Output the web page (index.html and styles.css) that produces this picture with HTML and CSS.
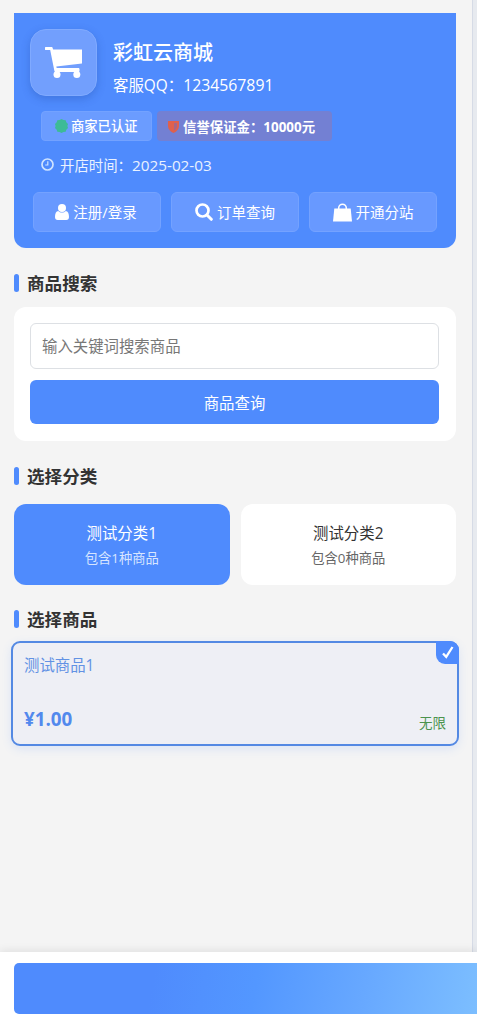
FILE: index.html
```html
<!DOCTYPE html>
<html lang="zh-CN">
<head>
<meta charset="utf-8">
<title>彩虹云商城</title>
<link rel="stylesheet" href="styles.css">
</head>
<body>
<main class="page">
  <header class="shop">
    <div class="shop-top">
      <div class="logo">
        <svg width="37" height="34" viewBox="0 0 37 34" fill="#fff"><path d="M1 1h6.200l1 2.600H37V17.500L11.300 20.600l.5 2H34.500v3H9.500L5.200 4H1a1.500 1.500 0 0 1 0-3z"/><path d="M10 22h24v4H10z"/><circle cx="12" cy="28.600" r="3.500"/><circle cx="31.800" cy="28.600" r="3.500"/></svg>
      </div>
      <div class="shop-name">
        <h1>彩虹云商城</h1>
        <p>客服QQ：<span class="number">1234567891</span></p>
      </div>
    </div>
    <div class="badges">
      <span class="badge verified"><svg width="13" height="14" viewBox="0 0 13 14"><path fill="#3dbb97" d="M6.500 0 8.500 1l2.200.2.600 2.100L13 5l-.6 2 .6 2-1.700 1.700-.6 2.100-2.200.2-2 1-2-1-2.200-.2-.6-2.100L0 9l.6-2L0 5l1.700-1.700.6-2.100L4.500 1z"/></svg><span>商家已认证</span></span>
      <span class="badge deposit"><svg width="11" height="13" viewBox="0 0 11 13"><path fill="#df604c" d="M0 1h11v5c0 3-2 5.500-5.500 7C2 11.500 0 9 0 6z"/><path fill="#a66587" d="M6 3h3v3c0 2-1 3.400-3 4.500z"/></svg><span>信誉保证金：10000元</span></span>
    </div>
    <div class="opened"><svg width="13" height="13" viewBox="0 0 13 13" fill="none" stroke="#cfe3ff"><circle cx="6.500" cy="6.500" r="5.500" stroke-width="1.700"/><path d="M6.800 3.300v3.700H4.200" stroke-width="1.200"/></svg><span>开店时间：<span class="date">2025-02-03</span></span></div>
    <nav class="actions">
      <a class="action"><svg width="14" height="16" viewBox="0 0 14 16" fill="#fff"><circle cx="7" cy="4" r="4"/><path d="M3.300 7c1 1 2.200 1.600 3.700 1.600S9.700 8 10.700 7C13 7.300 14 9.700 14 13c0 1.800-1 3-2.700 3H2.700C1 16 0 14.800 0 13c0-3.300 1-5.700 3.300-6z"/></svg><span>注册/登录</span></a>
      <a class="action"><svg width="18" height="18" viewBox="0 0 18 18" fill="none" stroke="#fff"><circle cx="7.500" cy="7.500" r="6" stroke-width="2.700"/><path d="m12 12 4.300 4.300" stroke-width="3" stroke-linecap="round"/></svg><span>订单查询</span></a>
      <a class="action"><svg width="19" height="19" viewBox="0 0 19 19"><path d="M5.700 8V5a3.800 3.800 0 0 1 7.600 0v3" fill="none" stroke="#fff" stroke-width="1.500"/><path fill="#fff" d="M1.300 5.500h16.400L19 18.500H0z"/></svg><span>开通分站</span></a>
    </nav>
  </header>

  <h2 class="section-title search-title">商品搜索</h2>
  <form class="search">
    <input class="keyword" type="text" placeholder="输入关键词搜索商品">
    <button class="submit" type="button">商品查询</button>
  </form>

  <h2 class="section-title category-title">选择分类</h2>
  <div class="categories">
    <div class="category selected"><strong>测试分类1</strong><small>包含1种商品</small></div>
    <div class="category"><strong>测试分类2</strong><small>包含0种商品</small></div>
  </div>

  <h2 class="section-title product-title">选择商品</h2>
  <article class="product">
    <span class="check"><svg width="12" height="13" viewBox="0 0 12 13" fill="none" stroke="#fff" stroke-width="2.300"><path d="m1 7.500 3.200 3.300L10.500 1"/></svg></span>
    <h3>测试商品1</h3>
    <div class="product-foot"><b>¥1.00</b><span>无限</span></div>
  </article>
</main>
<footer class="bottom"><div class="buy"></div></footer>
</body>
</html>
```

FILE: styles.css
```css
* { box-sizing: border-box; }
html { overflow: hidden; }
body {
  margin: 0;
  height: 1024px;
  display: flex;
  flex-direction: column;
  overflow: hidden;
  background: #e7eaef;
  color: #333;
  font-family: "Open Sans", "Noto Sans CJK SC", sans-serif;
  font-size: 15.400px;
}
h1, h2, h3, p { margin: 0; }
svg { display: block; flex: none; }

.page {
  width: 473px;
  height: 952px;
  padding: 13px 16px 0 14px;
  background: #f4f4f4;
  border-right: 1px solid #d6dbe6;
}

.shop {
  height: 235px;
  padding: 16px 19px 0;
  border-radius: 0 0 12px 12px;
  background: #4f8bfd;
  color: #fff;
}
.shop-top { display: flex; gap: 16px; height: 67px; margin-left: -3px; }
.logo {
  width: 67px;
  height: 67px;
  display: flex;
  align-items: center;
  justify-content: center;
  border: 1px solid #80aaff;
  border-radius: 16px;
  background: #729ffd;
  box-shadow: 0 3px 8px rgba(30, 70, 160, .3);
}
.shop-name { padding-top: 7px; }
.shop-name h1 { font-size: 20px; line-height: 33px; font-weight: 500; }
.shop-name p { font-size: 15.400px; line-height: 32px; white-space: nowrap; }
.number { font-size: 15.800px; }

.badges { display: flex; gap: 5px; margin: 15px 0 0 8px; }
.badge {
  height: 30px;
  display: flex;
  align-items: center;
  border-radius: 4px;
  font-size: 13.300px;
  white-space: nowrap;
}
.verified { width: 111px; padding-left: 13px; gap: 3px; background: #6b9cff; border: 1px solid #73a2ff; font-weight: 500; }
.deposit { width: 175px; padding-left: 11px; gap: 4px; background: #7380d3; font-weight: 700; font-size: 13.400px; }
.badge span { margin-top: -1px; }

.opened {
  height: 22px;
  display: flex;
  align-items: center;
  gap: 6px;
  margin: 13px 0 0 8px;
  color: #eaf2ff;
  font-size: 14.400px;
}
.opened svg { margin-bottom: 2px; }
.opened span { margin-top: -1px; }
.date { font-size: 15.300px; }

.actions { display: grid; grid-template-columns: repeat(3, 1fr); gap: 10px; margin-top: 16px; }
.action {
  height: 40px;
  display: flex;
  align-items: center;
  justify-content: center;
  gap: 4px;
  border: 1px solid #74a2ff;
  border-radius: 6px;
  background: #6899ff;
  font-size: 14.500px;
}
.action span { margin-top: -1px; }
.action:first-child { padding-right: 2px; }

.section-title {
  height: 24px;
  display: flex;
  align-items: center;
  gap: 8px;
  font-size: 17.600px;
  line-height: 24px;
  font-weight: 700;
}
.section-title::before {
  content: "";
  width: 5px;
  height: 18px;
  border-radius: 3px;
  background: #4f8bfd;
}
.search-title { margin: 23px 0 12px; }
.category-title { margin: 23px 0 16px; }
.product-title { margin: 22px 0 10px; }

.search {
  height: 134px;
  padding: 16px 17px 17px 16px;
  display: flex;
  flex-direction: column;
  gap: 11px;
  border-radius: 12px;
  background: #fff;
}
.keyword {
  height: 46px;
  padding: 1px 11px 0;
  border: 1px solid #dde0e4;
  border-radius: 6px;
  background: #fff;
  font: inherit;
}
.keyword::placeholder { color: #777; opacity: 1; }
.submit {
  height: 44px;
  padding: 0;
  border: 0;
  border-radius: 6px;
  background: #4f8bfd;
  color: #fff;
  font: inherit;
}

.categories { display: grid; grid-template-columns: 1fr 1fr; gap: 11px; }
.category {
  height: 81px;
  padding-top: 17px;
  display: flex;
  flex-direction: column;
  align-items: center;
  border-radius: 12px;
  background: #fff;
}
.category strong { font-size: 15.400px; line-height: 25px; font-weight: 400; }
.category small { color: #666; font-size: 13.300px; line-height: 25px; }
.category.selected { background: #4f8bfd; color: #fff; }
.selected small { color: #d7e5ff; }

.product {
  position: relative;
  height: 105px;
  margin: 0 -3px;
  padding: 10px 11px 0;
  border: 2px solid #5489e3;
  border-radius: 9px;
  background: #eeeff5;
  box-shadow: 0 3px 10px rgba(79, 139, 253, .15);
}
.product h3 { color: #6292e4; font-size: 15.400px; line-height: 25px; font-weight: 400; }
.product-foot { display: flex; justify-content: space-between; margin-top: 26px; line-height: 30px; }
.product-foot b { color: #5289ed; font-size: 18.800px; }
.product-foot span { color: #4b934d; font-size: 13.500px; padding-top: 4px; }
.check {
  position: absolute;
  top: -2px;
  right: -2px;
  width: 23px;
  height: 23px;
  display: flex;
  align-items: center;
  justify-content: center;
  border-radius: 0 9px 0 9px;
  background: #4f8bfd;
}

.bottom {
  position: relative;
  height: 72px;
  padding: 11px 0 10px 14px;
  background: #fff;
  box-shadow: 0 -2px 8px rgba(0, 0, 0, .08);
}
.buy {
  height: 51px;
  border-radius: 5px 0 0 5px;
  background: linear-gradient(100deg, #4f8bfd 30%, #5397ff 52%, #67a8ff 75%, #7cbeff 100%);
}
```
